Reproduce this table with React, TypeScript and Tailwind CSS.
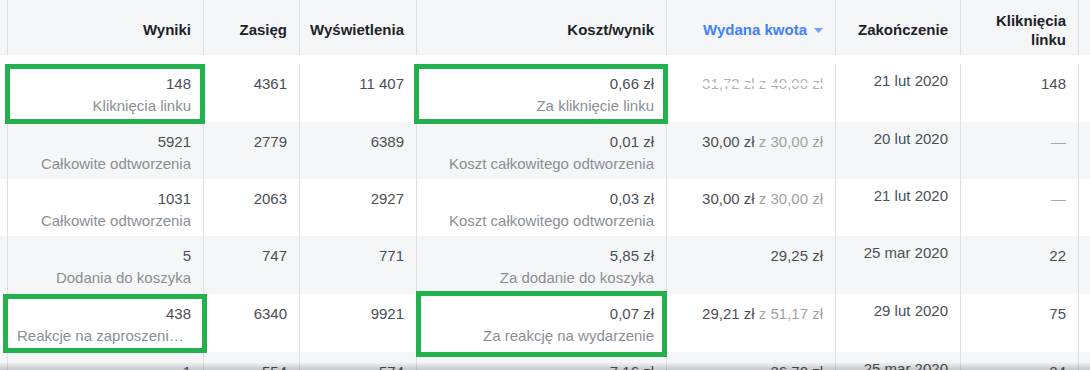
import React from "react";

const COLS =
  "grid grid-cols-[7px_196px_96px_117px_250px_169px_125px_118px_12px]";

type RowData = {
  gray: boolean;
  h: string;
  res: string;
  resLabel: string;
  reach: string;
  imp: string;
  cost: string;
  costLabel: string;
  spent: React.ReactNode;
  end: string;
  clicks: React.ReactNode;
};

const Dash = () => <span className="text-[#a3a8ae]">—</span>;

const Spent = ({ a, b }: { a: string; b?: string }) => (
  <span>
    {a}
    {b ? <span className="text-[#9ea2a8]"> z {b}</span> : null}
  </span>
);

const rows: RowData[] = [
  {
    gray: false,
    h: "h-[58px]",
    res: "148",
    resLabel: "Kliknięcia linku",
    reach: "4361",
    imp: "11 407",
    cost: "0,66 zł",
    costLabel: "Za kliknięcie linku",
    spent: (
      <span className="relative inline-block text-[#aeb2b8]">
        31,72 zł z 40,00 zł
        <span className="absolute left-0 right-0 top-[10px] h-[3px] bg-white" />
      </span>
    ),
    end: "21 lut 2020",
    clicks: "148",
  },
  {
    gray: true,
    h: "h-[57px]",
    res: "5921",
    resLabel: "Całkowite odtworzenia",
    reach: "2779",
    imp: "6389",
    cost: "0,01 zł",
    costLabel: "Koszt całkowitego odtworzenia",
    spent: <Spent a="30,00 zł" b="30,00 zł" />,
    end: "20 lut 2020",
    clicks: <Dash />,
  },
  {
    gray: false,
    h: "h-[57px]",
    res: "1031",
    resLabel: "Całkowite odtworzenia",
    reach: "2063",
    imp: "2927",
    cost: "0,03 zł",
    costLabel: "Koszt całkowitego odtworzenia",
    spent: <Spent a="30,00 zł" b="30,00 zł" />,
    end: "21 lut 2020",
    clicks: <Dash />,
  },
  {
    gray: true,
    h: "h-[58px]",
    res: "5",
    resLabel: "Dodania do koszyka",
    reach: "747",
    imp: "771",
    cost: "5,85 zł",
    costLabel: "Za dodanie do koszyka",
    spent: <Spent a="29,25 zł" />,
    end: "25 mar 2020",
    clicks: "22",
  },
  {
    gray: false,
    h: "h-[58px]",
    res: "438",
    resLabel: "Reakcje na zaproszenie na wydarzenie",
    reach: "6340",
    imp: "9921",
    cost: "0,07 zł",
    costLabel: "Za reakcję na wydarzenie",
    spent: <Spent a="29,21 zł" b="51,17 zł" />,
    end: "29 lut 2020",
    clicks: "75",
  },
  {
    gray: true,
    h: "h-[40px]",
    res: "1",
    resLabel: "Dodania do koszyka",
    reach: "554",
    imp: "574",
    cost: "7,16 zł",
    costLabel: "Za dodanie do koszyka",
    spent: <Spent a="36,70 zł" />,
    end: "25 mar 2020",
    clicks: "24",
  },
];

const cellBase =
  "border-l border-[#dddfe2] pr-3 text-right leading-[22px] min-w-0";

function HeaderCell({ children, blue }: { children: React.ReactNode; blue?: boolean }) {
  return (
    <div
      className={`flex h-[55px] flex-col items-end justify-center border-l border-[#dddfe2] pr-3 pt-[4px] text-right text-[15px] font-bold leading-[19px] ${
        blue ? "text-[#4080ff]" : "text-[#1d2129]"
      }`}
    >
      {children}
    </div>
  );
}

function BodyRow({ r }: { r: RowData }) {
  return (
    <div className={`${COLS} ${r.h} ${r.gray ? "bg-[#f5f6f7]" : "bg-white"}`}>
      <div />
      <div className={`${cellBase} pl-[9px] pt-[9px]`}>
        <div className="text-[#4b4f56]">{r.res}</div>
        <div className="overflow-hidden text-ellipsis whitespace-nowrap text-[#8a8f96]">
          {r.resLabel}
        </div>
      </div>
      <div className={`${cellBase} pt-[9px] text-[#4b4f56]`}>{r.reach}</div>
      <div className={`${cellBase} pt-[9px] text-[#4b4f56]`}>{r.imp}</div>
      <div className={`${cellBase} pt-[9px]`}>
        <div className="text-[#4b4f56]">{r.cost}</div>
        <div className="whitespace-nowrap text-[#8a8f96]">{r.costLabel}</div>
      </div>
      <div className={`${cellBase} whitespace-nowrap pt-[9px] text-[#4b4f56]`}>
        {r.spent}
      </div>
      <div className={`${cellBase} whitespace-nowrap pt-[6px] text-[#4b4f56]`}>
        {r.end}
      </div>
      <div className={`${cellBase} pt-[9px] text-[#4b4f56]`}>{r.clicks}</div>
      <div className="border-l border-[#dddfe2]" />
    </div>
  );
}

export default function App() {
  return (
    <div
      className="relative h-[370px] w-[1090px] overflow-hidden bg-white text-[15px]"
      style={{ fontFamily: '"Liberation Sans", Arial, sans-serif' }}
    >
      {/* Header */}
      <div className={`${COLS} bg-[#f5f6f7]`}>
        <div />
        <HeaderCell>Wyniki</HeaderCell>
        <HeaderCell>Zasięg</HeaderCell>
        <HeaderCell>Wyświetlenia</HeaderCell>
        <HeaderCell>Koszt/wynik</HeaderCell>
        <HeaderCell blue>
          <span className="flex items-center gap-[7px]">
            Wydana kwota
            <svg width="9" height="5" viewBox="0 0 9 5" className="mt-[2px]">
              <path d="M0 0 L9 0 L4.5 5 Z" fill="#6f9cf5" />
            </svg>
          </span>
        </HeaderCell>
        <HeaderCell>Zakończenie</HeaderCell>
        <HeaderCell>
          <span>
            Kliknięcia
            <br />
            linku
          </span>
        </HeaderCell>
        <div className="border-l border-[#dddfe2]" />
      </div>

      {/* spacer */}
      <div className="h-[9px] bg-white" />

      {/* Body */}
      <div className="flex flex-col">
        {rows.map((r, i) => (
          <BodyRow key={i} r={r} />
        ))}
      </div>

      {/* Annotation boxes */}
      <div className="absolute left-[5px] top-[64px] h-[60px] w-[200px] border-[5px] border-[#22b14c]" />
      <div className="absolute left-[414px] top-[64px] h-[60px] w-[254px] border-[5px] border-[#22b14c]" />
      <div className="absolute left-[3px] top-[294px] h-[59px] w-[204px] border-[5px] border-[#22b14c]" />
      <div className="absolute left-[416px] top-[291px] h-[66px] w-[251px] border-[5px] border-[#22b14c]" />

      {/* bottom scroll shadow */}
      <div className="absolute bottom-0 left-0 right-0 h-[8px] bg-linear-to-b from-transparent to-black/20" />
    </div>
  );
}
